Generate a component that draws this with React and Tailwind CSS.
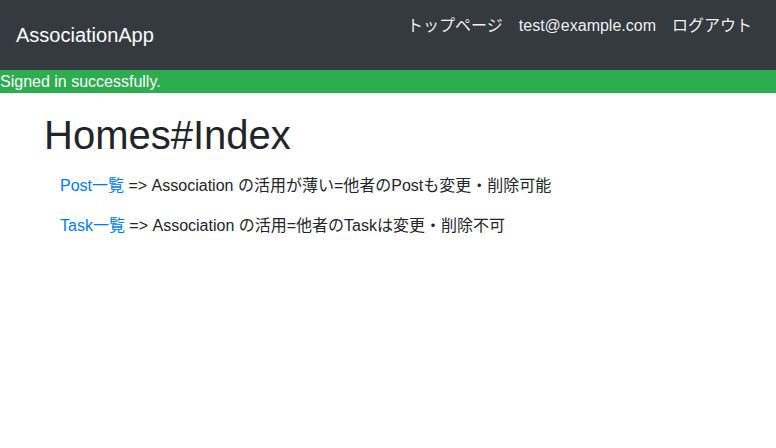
export default function App() {
  const font = { fontFamily: '"Liberation Sans", "Noto Sans CJK JP", sans-serif' };
  return (
    <div className="min-h-[448px] bg-white" style={font}>
      <nav className="h-[70px] bg-[#343a40] flex justify-between px-4">
        <div className="flex items-center text-[20px] text-white leading-[30px]">AssociationApp</div>
        <ul className="flex items-start pt-[14px] text-[16px] leading-[24px] text-white/95">
          <li className="px-2">トップページ</li>
          <li className="px-2">test@example.com</li>
          <li className="px-2">ログアウト</li>
        </ul>
      </nav>
      <div className="h-[23px] bg-[#2dac50] text-white text-[16px] leading-[23px]">Signed in successfully.</div>
      <div className="px-[44px] pt-[18px]">
        <h1 className="text-[40px] leading-[48px] text-[#212529] font-medium mb-[15px]">Homes#Index</h1>
        <div className="pl-4 text-[16px] leading-[24px] text-[#212529]">
          <p className="mb-4"><span className="text-[#007bff]">Post一覧</span> =&gt; Association の活用が薄い=他者のPostも変更・削除可能</p>
          <p><span className="text-[#007bff]">Task一覧</span> =&gt; Association の活用=他者のTaskは変更・削除不可</p>
        </div>
      </div>
    </div>
  );
}
